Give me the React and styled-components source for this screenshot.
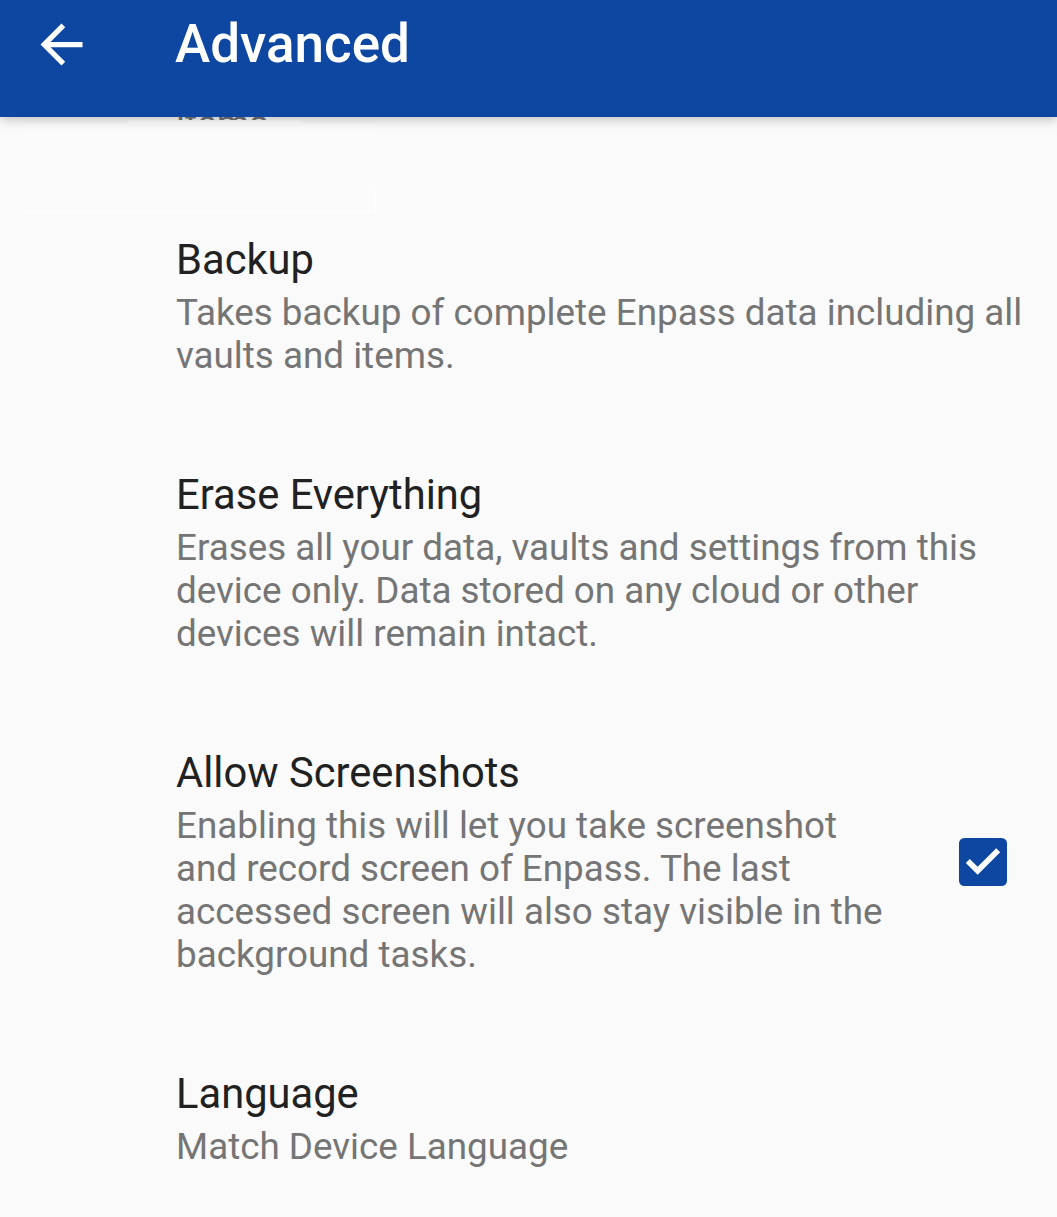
import React from 'react'
import styled, { createGlobalStyle } from 'styled-components'

const Global = createGlobalStyle`
  html, body {
    margin: 0;
    padding: 0;
    background: #fafafa;
  }
  body {
    font-family: Roboto, "Noto Sans", "Liberation Sans", sans-serif;
    -webkit-font-smoothing: antialiased;
  }
`

const prefs = [
  {
    title: 'Backup',
    summary: 'Takes backup of complete Enpass data including all vaults and items.'
  },
  {
    title: 'Erase Everything',
    summary: 'Erases all your data, vaults and settings from this device only. Data stored on any cloud or other devices will remain intact.'
  },
  {
    title: 'Allow Screenshots',
    summary: 'Enabling this will let you take screenshot and record screen of Enpass. The last accessed screen will also stay visible in the background tasks.',
    checked: true
  },
  {
    title: 'Language',
    summary: 'Match Device Language'
  }
]

const BackIcon = () => (
  <svg width="63" height="63" viewBox="0 0 24 24" fill="#fff">
    <path d="M20 11H7.83l5.59-5.59L12 4l-8 8 8 8 1.41-1.41L7.83 13H20v-2z" />
  </svg>
)

const CheckIcon = () => (
  <svg width="64" height="64" viewBox="0 0 24 24">
    <rect x="3" y="3" width="18" height="18" rx="2" fill="#0d47a1" />
    <path d="M6.3 11.6l3.7 3.7 7.7-7.7" fill="none" stroke="#fff" strokeWidth="2.1" strokeLinecap="butt" />
  </svg>
)

const App = () => (
  <Screen>
    <Global />
    <AppBar>
      <Toolbar>
        <NavButton><BackIcon /></NavButton>
        <Title>Advanced</Title>
      </Toolbar>
    </AppBar>
    <List>
      {/* leftover of the scrolled-away row, peeking under the bar */}
      <Ghost>
        <PeekClip><PeekText>items.</PeekText></PeekClip>
        <GhostBar />
        <GhostBox />
      </Ghost>
      {prefs.map(p => (
        <Item key={p.title}>
          <Body>
            <ItemTitle>{p.title}</ItemTitle>
            <Summary>{p.summary}</Summary>
          </Body>
          {p.checked && <Widget><CheckIcon /></Widget>}
        </Item>
      ))}
    </List>
  </Screen>
)

const Screen = styled.div`
    min-height: 1217px;
    background: #fafafa;
    overflow: hidden;
  `,
  AppBar = styled.header`
    position: relative;
    z-index: 2;
    height: 117px;
    background: #0d47a1;
    box-shadow: 0 3px 10px rgba(0, 0, 0, 0.22);
  `,
  Toolbar = styled.div`
    display: flex;
    align-items: center;
    height: 88px;
    padding-left: 30px;
  `,
  NavButton = styled.div`
    display: flex;
    width: 63px;
    height: 63px;
  `,
  Title = styled.h1`
    margin: 0 0 0 82px;
    color: #fff;
    font-size: 53px;
    font-weight: 500;
    letter-spacing: 0;
  `,
  List = styled.div`
    position: relative;
    padding-top: 71px;
  `,
  Ghost = styled.div`
    position: absolute;
    top: 0;
    left: 0;
    right: 0;
    height: 96px;
  `,
  PeekClip = styled.div`
    position: absolute;
    top: 0;
    left: 176px;
    height: 3px;
    overflow: hidden;
  `,
  PeekText = styled.div`
    margin-top: -15px;
    font-size: 37px;
    line-height: 43px;
    color: #757575;
  `,
  GhostBar = styled.div`
    position: absolute;
    top: 3px;
    left: 128px;
    width: 173px;
    height: 5px;
    background: #fff;
  `,
  GhostBox = styled.div`
    position: absolute;
    top: 7px;
    left: 24px;
    width: 352px;
    height: 88px;
    background: #fbfbfb;
    border-bottom: 1px solid #fff;
    &::after {
      content: '';
      position: absolute;
      right: 0;
      bottom: 0;
      width: 1px;
      height: 24px;
      background: #fff;
    }
  `,
  Item = styled.div`
    display: flex;
    align-items: center;
    padding: 47px 22px 46px 176px;
  `,
  Body = styled.div`
    flex: 1;
    min-width: 0;
  `,
  ItemTitle = styled.div`
    font-size: 41.7px;
    line-height: 50px;
    color: #212121;
  `,
  Summary = styled.div`
    margin-top: 6px;
    font-size: 36.8px;
    line-height: 43px;
    color: #757575;
  `,
  Widget = styled.div`
    box-sizing: border-box;
    display: flex;
    flex: 0 0 160px;
    margin-right: -22px;
    padding-left: 54px;
  `

export default App
